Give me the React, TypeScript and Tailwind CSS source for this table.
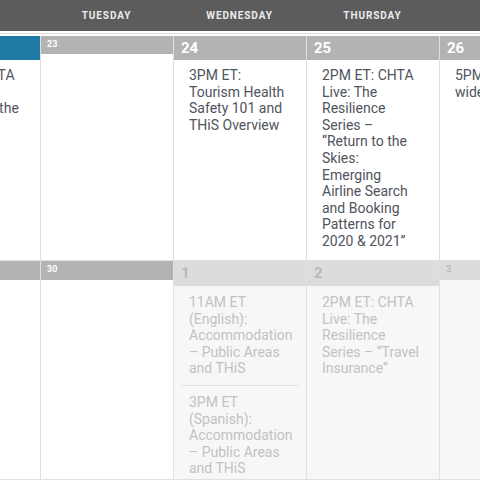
import React from "react";

type Cell = {
  day: string;
  big?: boolean;
  tone: "current" | "past" | "next";
  events?: string[];
};

const days = ["MONDAY", "TUESDAY", "WEDNESDAY", "THURSDAY", "FRIDAY"];

const week1: Cell[] = [
  {
    day: "22",
    big: true,
    tone: "current",
    events: ["2PM ET: CHTA Live: Reinventing the Caribbean"],
  },
  { day: "23", tone: "past" },
  {
    day: "24",
    big: true,
    tone: "past",
    events: ["3PM ET: Tourism Health Safety 101 and THiS Overview"],
  },
  {
    day: "25",
    big: true,
    tone: "past",
    events: [
      "2PM ET: CHTA Live: The Resilience Series – “Return to the Skies: Emerging Airline Search and Booking Patterns for 2020 & 2021”",
    ],
  },
  {
    day: "26",
    big: true,
    tone: "past",
    events: ["5PM ET: Island-wide Update"],
  },
];

const week2: Cell[] = [
  { day: "29", tone: "past" },
  { day: "30", tone: "past" },
  {
    day: "1",
    big: true,
    tone: "next",
    events: [
      "11AM ET (English): Accommodation – Public Areas and THiS",
      "3PM ET (Spanish): Accommodation – Public Areas and THiS",
    ],
  },
  {
    day: "2",
    big: true,
    tone: "next",
    events: ["2PM ET: CHTA Live: The Resilience Series – “Travel Insurance”"],
  },
  { day: "3", tone: "next" },
];

function DayHead({ cell, row }: { cell: Cell; row: number }) {
  const bg =
    cell.tone === "current"
      ? "bg-[#1f7aa6]"
      : cell.tone === "past"
      ? "bg-[#b3b3b3]"
      : "bg-[#dcdcdc]";
  const color = cell.tone === "next" ? "text-[#b9b9b9]" : "text-white";
  if (cell.big) {
    return (
      <div
        className={`${bg} ${color} ${
          row === 1 ? "h-[24px]" : "h-[25px]"
        } flex items-center pl-[7px] text-[15px] font-bold leading-none`}
      >
        {cell.day}
      </div>
    );
  }
  return (
    <div
      className={`${bg} ${color} ${
        row === 1 ? "h-[18px]" : "h-[19px]"
      } pl-[6px] pt-[4px] text-[9px] font-bold leading-none`}
    >
      {cell.day}
    </div>
  );
}

function DayCell({ cell, row }: { cell: Cell; row: number }) {
  const next = cell.tone === "next";
  return (
    <div
      className={`border-l border-[#e0e0e0] overflow-hidden ${
        next ? "bg-[#f7f7f7]" : "bg-white"
      }`}
    >
      <DayHead cell={cell} row={row} />
      <div className={`px-[7px] ${row === 1 ? "pt-[7px]" : "pt-[8px]"}`}>
        {cell.events?.map((e, i) => (
          <div
            key={i}
            className={`pl-[8px] pr-[11px] text-[14px] leading-[16.6px] ${
              next ? "text-[#c2c2c2]" : "text-[#50545c]"
            } ${i > 0 ? "border-t border-[#e2e2e2] mt-[8px] pt-[8px]" : ""}`}
          >
            {e}
          </div>
        ))}
      </div>
    </div>
  );
}

export default function App() {
  return (
    <div className="w-[480px] h-[480px] overflow-hidden bg-white font-['Roboto',sans-serif]">
      <div className="ml-[-93px] w-[665px]">
        <div className="grid grid-cols-5 h-[31px] bg-[#5c5c5c]">
          {days.map((d) => (
            <div
              key={d}
              className="flex items-center justify-center text-[10px] font-bold tracking-[0.9px] text-[#ececec]"
            >
              {d}
            </div>
          ))}
        </div>
        <div className="h-[2px]" />
        <div className="grid grid-cols-5 border-t border-[#e0e0e0] h-[227px] pt-[2px]">
          {week1.map((c) => (
            <DayCell key={c.day} cell={c} row={1} />
          ))}
        </div>
        <div className="grid grid-cols-5 border-t border-b border-[#e0e0e0] h-[220px]">
          {week2.map((c) => (
            <DayCell key={c.day} cell={c} row={2} />
          ))}
        </div>
      </div>
    </div>
  );
}
